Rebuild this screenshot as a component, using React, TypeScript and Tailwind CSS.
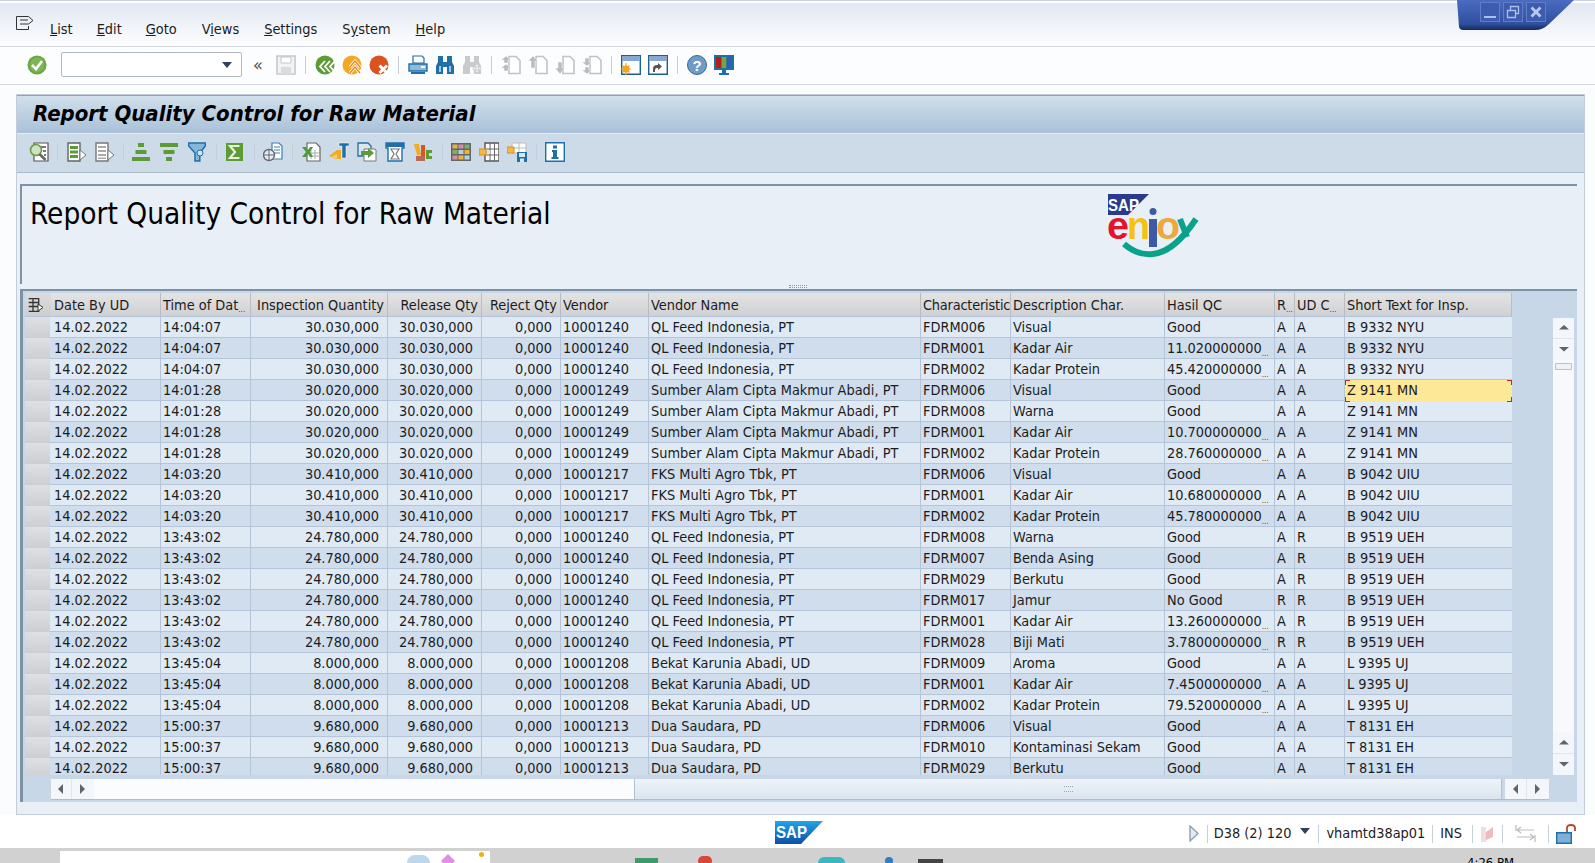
import React from 'react';

type Row = {
  time: string;
  qty: string;
  vendor: string;
  name: string;
  code: string;
  desc: string;
  hasil: string;
  cut?: boolean;
  r: string;
  ud: string;
  text: string;
};

const mk = (time: string, qty: string, vendor: string, name: string, text: string, items: [string, string, string, string, string][]): Row[] =>
  items.map(([code, desc, hasil, r, ud]) => ({
    time,
    qty,
    vendor,
    name,
    code,
    desc,
    hasil,
    cut: hasil.length > 8,
    r,
    ud,
    text,
  }));

const rows: Row[] = [
  ...mk('14:04:07', '30.030,000', '10001240', 'QL Feed Indonesia, PT', 'B 9332 NYU', [
    ['FDRM006', 'Visual', 'Good', 'A', 'A'],
    ['FDRM001', 'Kadar Air', '11.020000000', 'A', 'A'],
    ['FDRM002', 'Kadar Protein', '45.420000000', 'A', 'A'],
  ]),
  ...mk('14:01:28', '30.020,000', '10001249', 'Sumber Alam Cipta Makmur Abadi, PT', 'Z 9141 MN', [
    ['FDRM006', 'Visual', 'Good', 'A', 'A'],
    ['FDRM008', 'Warna', 'Good', 'A', 'A'],
    ['FDRM001', 'Kadar Air', '10.700000000', 'A', 'A'],
    ['FDRM002', 'Kadar Protein', '28.760000000', 'A', 'A'],
  ]),
  ...mk('14:03:20', '30.410,000', '10001217', 'FKS Multi Agro Tbk, PT', 'B 9042 UIU', [
    ['FDRM006', 'Visual', 'Good', 'A', 'A'],
    ['FDRM001', 'Kadar Air', '10.680000000', 'A', 'A'],
    ['FDRM002', 'Kadar Protein', '45.780000000', 'A', 'A'],
  ]),
  ...mk('13:43:02', '24.780,000', '10001240', 'QL Feed Indonesia, PT', 'B 9519 UEH', [
    ['FDRM008', 'Warna', 'Good', 'A', 'R'],
    ['FDRM007', 'Benda Asing', 'Good', 'A', 'R'],
    ['FDRM029', 'Berkutu', 'Good', 'A', 'R'],
    ['FDRM017', 'Jamur', 'No Good', 'R', 'R'],
    ['FDRM001', 'Kadar Air', '13.260000000', 'A', 'R'],
    ['FDRM028', 'Biji Mati', '3.7800000000', 'R', 'R'],
  ]),
  ...mk('13:45:04', '8.000,000', '10001208', 'Bekat Karunia Abadi, UD', 'L 9395 UJ', [
    ['FDRM009', 'Aroma', 'Good', 'A', 'A'],
    ['FDRM001', 'Kadar Air', '7.4500000000', 'A', 'A'],
    ['FDRM002', 'Kadar Protein', '79.520000000', 'A', 'A'],
  ]),
  ...mk('15:00:37', '9.680,000', '10001213', 'Dua Saudara, PD', 'T 8131 EH', [
    ['FDRM006', 'Visual', 'Good', 'A', 'A'],
    ['FDRM010', 'Kontaminasi Sekam', 'Good', 'A', 'A'],
    ['FDRM029', 'Berkutu', 'Good', 'A', 'A'],
  ]),
];

const cols = 'grid grid-cols-[26px_110px_90px_137px_94px_79px_88px_272px_90px_154px_110px_20px_50px_167px]';

const Ico: React.FC<{ children: React.ReactNode; w?: number }> = ({ children, w = 20 }) => (
  <svg width={w} height="20" viewBox={`0 0 ${w} 20`} className="shrink-0 block">
    {children}
  </svg>
);

const Sep = ({ className = 'mx-[9px]' }: { className?: string }) => <div className={`w-px h-[18px] bg-[#c3d0dc] shrink-0 ${className}`} />;

const Page = () => <path d="M8 1.500h7l4 4v13H8z" fill="#fff" stroke="#c0c3c5" strokeWidth="1.600" />;
const G = '#b9bcbe';

const Icons = {
  check: (
    <Ico>
      <circle cx="10" cy="10" r="9.500" fill="#6aa743" />
      <circle cx="10" cy="10" r="7.500" fill="#7cb554" />
      <path d="M5 10l4 4 6-8" fill="none" stroke="#fff" strokeWidth="2.600" />
    </Ico>
  ),
  save: (
    <Ico>
      <path d="M1 1h18v18H1z" fill="#f2f3f3" stroke="#c5c8ca" strokeWidth="1.600" />
      <path d="M5 2h10v6H5z" fill="#fff" stroke="#c5c8ca" />
      <path d="M5 12h10v7H5z" fill="#d9dbdc" />
    </Ico>
  ),
  back: (
    <Ico>
      <circle cx="10" cy="10" r="9.500" fill="#5d9b36" />
      <path d="M10 6l-5 5.500 5 5.500M15 6l-5 5.500 5 5.500M20 6l-5 5.500 5 5.500" fill="none" stroke="#fff" strokeWidth="1.800" />
    </Ico>
  ),
  exit: (
    <Ico>
      <circle cx="10" cy="10" r="9.500" fill="#f5a623" />
      <path d="M8 12l5-6 5 6M8 18l5-6 5 6" fill="none" stroke="#fff" strokeWidth="3" />
      <path d="M8 12l5-6 5 6M8 18l5-6 5 6" fill="none" stroke="#e8801c" strokeWidth="1.200" />
    </Ico>
  ),
  cancel: (
    <Ico>
      <circle cx="10" cy="10" r="9.500" fill="#d9541e" />
      <path d="M10.500 10.500l7.500 7.500M18 10.500L10.500 18" stroke="#fff" strokeWidth="3" />
    </Ico>
  ),
  print: (
    <Ico>
      <path d="M5 1h9l2 2v5H5z" fill="#fff" stroke="#1f6fa8" strokeWidth="1.200" />
      <path d="M1 9h18v7H1z" fill="#8fb9d8" stroke="#1f6fa8" strokeWidth="1.400" />
      <path d="M3 17h14v2H3z" fill="#1f6fa8" />
      <path d="M13 11h4v2h-4z" fill="#fff" />
    </Ico>
  ),
  find: (
    <Ico>
      <path d="M3 1h5v6h4V1h5v6l2 4v8h-7v-7H8v7H1v-8l2-4z" fill="#1f6fa8" />
      <path d="M4 11h2v6H4zM14 11h2v6h-2z" fill="#9cc5e1" />
    </Ico>
  ),
  findNext: (
    <Ico>
      <path d="M3 1h5v6h4V1h5v6l2 4v8h-7v-7H8v7H1v-8l2-4z" fill="#c8cbcd" />
      <path d="M11 12h8v3h-8zM13.500 9.500h3v8h-3z" fill="#eceded" stroke="#c8cbcd" strokeWidth="0.600" />
    </Ico>
  ),
  pageFirst: (
    <Ico>
      <Page />
      <path d="M0 5l5-4 5 4H7v3H3V5zM0 13l5-4 5 4H7v3H3v-3z" fill={G} stroke="#fff" strokeWidth="0.500" />
    </Ico>
  ),
  pagePrev: (
    <Ico>
      <Page />
      <path d="M0 6l5-5 5 5H7v7H3V6z" fill={G} stroke="#fff" strokeWidth="0.500" />
    </Ico>
  ),
  pageNext: (
    <Ico>
      <Page />
      <path d="M0 13l5 6 5-6H7V7H3v6z" fill={G} stroke="#fff" strokeWidth="0.500" />
    </Ico>
  ),
  pageLast: (
    <Ico>
      <Page />
      <path d="M0 7l5 4 5-4H7V3H3v4zM0 15l5 4 5-4H7v-3H3v3z" fill={G} stroke="#fff" strokeWidth="0.500" />
    </Ico>
  ),
  newWin: (
    <Ico>
      <path d="M.7.700h18.600v18.600H.7z" fill="#fff" stroke="#1d5f8e" strokeWidth="1.400" />
      <path d="M1 1h18v5H1z" fill="#88a9cf" />
      <circle cx="5" cy="14" r="3.500" fill="#f5a51c" />
      <path d="M5 8v12M0 14h10M1.500 10.500l7 7M8.500 10.500l-7 7" stroke="#f5a51c" strokeWidth="1.200" />
    </Ico>
  ),
  shortcut: (
    <Ico>
      <path d="M.7.700h18.600v18.600H.7z" fill="#fff" stroke="#1d5f8e" strokeWidth="1.400" />
      <path d="M1 1h18v5H1z" fill="#88a9cf" />
      <path d="M5 17v-3q0-4 4-4h1V8l4 3.500-4 3.500v-2H9q-2 0-2 2v2z" fill="#555" />
    </Ico>
  ),
  help: (
    <Ico>
      <circle cx="10" cy="10" r="9.500" fill="#6f9bc5" stroke="#2c6da0" strokeWidth="1" />
      <text x="10" y="15.500" textAnchor="middle" fontSize="15" fontWeight="700" fontFamily="'Liberation Sans', sans-serif" fill="#fff">
        ?
      </text>
    </Ico>
  ),
  monitor: (
    <Ico>
      <path d="M0 0h20v15H0z" fill="#1f6fa8" />
      <path d="M2 2h5.500v11H2z" fill="#b51d1d" />
      <path d="M7.500 2h5v11h-5z" fill="#78a63c" />
      <path d="M12.500 2H18v11h-5.500z" fill="#2f5fb3" />
      <path d="M8 15h4v3H8zM5 18h10v2H5z" fill="#1f6fa8" />
    </Ico>
  ),
  detail: (
    <Ico>
      <path d="M5 1h14v18H5z" fill="#fff" stroke="#555" strokeWidth="1.200" />
      <path d="M8 4h9v2H8zM14 8h3v2h-3zM15 12h2v2h-2z" fill="#777" />
      <circle cx="7" cy="8" r="5.500" fill="#cfe3c0" stroke="#6a9a4a" strokeWidth="1.600" />
      <path d="M10.500 12l6 6" stroke="#666" strokeWidth="2.600" />
    </Ico>
  ),
  docGreen: (
    <Ico>
      <path d="M1 1h12v18H1z" fill="#fff" stroke="#5d6a5d" strokeWidth="1.400" />
      <path d="M3 4h8v3H3zM3 8.500h8v3H3zM3 13h8v3H3z" fill="#5d9b36" />
      <path d="M13 8l6 5-6 5z" fill="#fff" stroke="#777" />
    </Ico>
  ),
  docGray: (
    <Ico>
      <path d="M1 1h12v18H1z" fill="#fff" stroke="#777" strokeWidth="1.400" />
      <path d="M3 4h8v2H3zM3 8h8v2H3zM3 12h8v2H3zM3 15.500h8v1.500H3z" fill="#aaa" />
      <path d="M13 8l6 5-6 5z" fill="#fff" stroke="#777" />
    </Ico>
  ),
  sortAsc: (
    <Ico w={18}>
      <path d="M6 1h6v4H6zM3.500 8h11v4h-11zM0 15h18v4H0z" fill="#5d9b36" />
    </Ico>
  ),
  sortDesc: (
    <Ico w={18}>
      <path d="M0 1h18v4H0zM3.500 8h11v4h-11zM6 15h6v4H6z" fill="#5d9b36" />
    </Ico>
  ),
  filter: (
    <Ico w={18}>
      <path d="M.7 1h16.600v3l-5.500 7v8H7v-8L.7 4z" fill="#86b6d9" stroke="#1f6fa8" strokeWidth="1.500" />
      <circle cx="12" cy="11" r="3" fill="#cfe3f2" stroke="#1f6fa8" />
    </Ico>
  ),
  sigma: (
    <Ico w={17}>
      <path d="M0 1h17v18H0z" fill="#5d9b36" />
      <path d="M13.500 4H4l5 6-5 6h9.500" fill="none" stroke="#e8f2de" strokeWidth="2.200" />
    </Ico>
  ),
  abap: (
    <Ico>
      <path d="M9 1h7l3 3v13H9z" fill="#fff" stroke="#3f7fae" strokeWidth="1.200" />
      <path d="M11 5h6M11 8h6M11 11h6" stroke="#3f7fae" />
      <circle cx="6" cy="13" r="5.500" fill="#e8edf0" stroke="#667" strokeWidth="1.400" />
      <path d="M6 7.500v11M1 13h10" stroke="#667" />
    </Ico>
  ),
  excel: (
    <Ico>
      <path d="M6 1h9l4 4v14H6z" fill="#fff" stroke="#666" strokeWidth="1.200" />
      <path d="M10 8v9M14 8v9M8 11h10M8 14h10" stroke="#aaa" />
      <path d="M1 5h4l2 3 2-3h3L9 10l3 5H9l-2-3-2 3H1l4-5z" fill="#4f9a3b" />
    </Ico>
  ),
  word: (
    <Ico>
      <path d="M0 14l8-6h4v9H7z" fill="#f0ac22" />
      <path d="M10 1h10v3h-3v12h-4V4h-3z" fill="#1f6fa8" stroke="#fff" strokeWidth="0.500" />
      <path d="M2 15l6-3v5z" fill="#f8c964" />
    </Ico>
  ),
  local: (
    <Ico>
      <path d="M1 1h10l3 3v10H1z" fill="#d7e7f3" stroke="#1f6fa8" strokeWidth="1.300" />
      <path d="M7 7h11l1 1v11H7z" fill="#fff" stroke="#777" />
      <path d="M4 9h7V6l6 5-6 5v-3H4z" fill="#5d9b36" />
    </Ico>
  ),
  layoutT: (
    <Ico>
      <path d="M1 1h18v5h-2v13H3V6H1z" fill="#fff" stroke="#1f6fa8" strokeWidth="1.400" />
      <path d="M1 1h18v4H1z" fill="#1f6fa8" />
      <path d="M6 7h8l-3 5 3 5H6l3-5z" fill="none" stroke="#777" strokeWidth="1.200" />
    </Ico>
  ),
  abc: (
    <Ico>
      <path d="M1 2h5l2 11H4z" fill="#f0ac22" />
      <path d="M8 3h4v11H8z" fill="#d8561f" />
      <path d="M13 8h6v3h-3v3h3v3h-6z" fill="#5d9b36" />
      <path d="M3 14h9v5H3z" fill="#b43a1a" opacity="0.700" />
    </Ico>
  ),
  gridColor: (
    <Ico>
      <path d="M0 1h20v18H0z" fill="#666" />
      <path d="M1.500 2.500h5v4h-5z" fill="#e9b33c" />
      <path d="M7.500 2.500h5v4h-5z" fill="#d78fa0" />
      <path d="M13.500 2.500h5v4h-5z" fill="#7fb069" />
      <path d="M1.500 8h5v4h-5z" fill="#7fb069" />
      <path d="M7.500 8h5v4h-5z" fill="#b6cfe2" />
      <path d="M13.500 8h5v4h-5z" fill="#e9b33c" />
      <path d="M1.500 13.500h5v4h-5z" fill="#d78fa0" />
      <path d="M7.500 13.500h5v4h-5z" fill="#e9b33c" />
      <path d="M13.500 13.500h5v4h-5z" fill="#b6cfe2" />
    </Ico>
  ),
  gridPick: (
    <Ico>
      <path d="M6 1h14v18H6z" fill="#fff" stroke="#555" strokeWidth="1.400" />
      <path d="M11 1v18M15.500 1v18M6 7h14M6 13h14" stroke="#666" />
      <path d="M6 8h5v4H6z" fill="#ddd" />
      <path d="M0 7h7v6H0z" fill="#f5b942" stroke="#e08a18" />
    </Ico>
  ),
  gridSave: (
    <Ico>
      <path d="M5 1h14v10H5z" fill="#fff" stroke="#bbb" />
      <path d="M12 1v10M5 6h14" stroke="#bbb" />
      <path d="M0 5h7v6H0z" fill="#f5b942" stroke="#e08a18" />
      <path d="M10 10h10v10H10z" fill="#1f6fa8" />
      <path d="M12 11h6v4h-6zM13 16.500h4V20h-4z" fill="#d7e7f3" />
    </Ico>
  ),
  info: (
    <Ico>
      <path d="M.7.700h18.600v18.600H.7z" fill="#fff" stroke="#1f6fa8" strokeWidth="1.400" />
      <path d="M8 3.500h4v3H8zM7 8h5v7h1.500v2h-7v-2H8V10H7z" fill="#1f6fa8" />
    </Ico>
  ),
};

const Arrow = ({ dir }: { dir: 'u' | 'd' | 'l' | 'r' }) => {
  const p = { u: 'M0 6.500L5 2l5 4.500z', d: 'M0 2h10L5 6.500z', l: 'M7 0v10L2 5z', r: 'M2 0v10l5-5z' }[dir];
  return (
    <svg width="10" height="10" viewBox="0 0 10 10">
      <path d={p} fill="#5f656b" />
    </svg>
  );
};

const ScrollBtn = ({ dir, className = '' }: { dir: 'u' | 'd' | 'l' | 'r'; className?: string }) => (
  <div className={`flex items-center justify-center bg-[#f3f6fa] ${className}`}>
    <Arrow dir={dir} />
  </div>
);

const Dots = () => <span className="self-end pb-[2px] text-[8px] leading-none text-[#444]">...</span>;

const SapLogo = () => (
  <svg width="48" height="23" viewBox="0 0 48 23" className="block">
    <defs>
      <linearGradient id="sapg" x1="0" y1="0" x2="0" y2="1">
        <stop offset="0" stopColor="#20a5e6" />
        <stop offset="1" stopColor="#0b4fa8" />
      </linearGradient>
    </defs>
    <path d="M0 0h48L26 23H0z" fill="url(#sapg)" />
    <text x="1" y="17" fontSize="17" fontWeight="700" fontFamily="'Liberation Sans', sans-serif" fill="#fff" textLength="31" lengthAdjust="spacingAndGlyphs">
      SAP
    </text>
  </svg>
);

const EnjoyLogo = () => (
  <svg width="92" height="65" viewBox="0 0 92 65" className="block">
    <path d="M0 0h41L20 21H0z" fill="#2a3a8c" />
    <text x="0" y="17" fontSize="17" fontWeight="700" fontFamily="'Liberation Sans', sans-serif" fill="#fff" textLength="31" lengthAdjust="spacingAndGlyphs">
      SAP
    </text>
    <g fontFamily="'Liberation Sans', sans-serif" fontWeight="700" fontSize="38">
      <text x="-1" y="45" fill="#e2142d" textLength="22" lengthAdjust="spacingAndGlyphs">e</text>
      <text x="19" y="45" fill="#f6c211" textLength="23" lengthAdjust="spacingAndGlyphs">n</text>
      <text x="48" y="45" fill="#eea83c" textLength="24" lengthAdjust="spacingAndGlyphs">o</text>
    </g>
    <circle cx="45" cy="17.500" r="3.500" fill="#3c5aa6" />
    <path d="M41 25h8v28h-8z" fill="#3c5aa6" />
    <path d="M16 50Q30 62 45 60Q66 58 88 25" fill="none" stroke="#0ba28c" strokeWidth="6" />
    <path d="M72 25l7 18" fill="none" stroke="#0ba28c" strokeWidth="6" />
  </svg>
);

const Cell = ({ children, right, first }: { children?: React.ReactNode; right?: boolean; first?: boolean }) => (
  <div className={`flex h-full min-w-0 items-center overflow-hidden whitespace-nowrap border-r border-[#b4c5d9] ${right ? 'justify-end pr-[8px]' : first ? 'pl-[3px]' : 'pl-[2px]'}`}>
    {children}
  </div>
);

const Head = ({ label, right, cut, tight, first }: { label: string; right?: boolean; cut?: boolean; tight?: boolean; first?: boolean }) => (
  <div className={`flex h-full min-w-0 items-center overflow-hidden whitespace-nowrap border-r border-[#b9bcc0] bg-gradient-to-b from-[#e4e4e4] to-[#cfd0d2] pt-[2px] ${right ? 'justify-end pr-[3px]' : first ? 'pl-[3px]' : 'pl-[2px]'} ${tight ? 'tracking-[-0.2px]' : ''}`}>
    {label}
    {cut && <Dots />}
  </div>
);

export default function App() {
  return (
    <div className="relative flex h-[863px] w-[1595px] flex-col overflow-hidden bg-[#fbfcfe] font-['DejaVu_Sans',sans-serif] text-[14.4px] text-[#1c1c1c] [font-stretch:condensed]">
      {/* window buttons */}
      <div className="absolute right-[20px] top-0 z-10 h-[31px] w-[118px]">
        <svg width="118" height="31" viewBox="0 0 118 31" className="absolute inset-0">
          <defs>
            <linearGradient id="wing" x1="0" y1="0" x2="0" y2="1">
              <stop offset="0" stopColor="#4a6bc0" />
              <stop offset="0.8" stopColor="#2f4f9f" />
              <stop offset="1" stopColor="#14285c" />
            </linearGradient>
          </defs>
          <path d="M0 0h117L92 24q-6 6-14 6H6q-3 0-4-3z" fill="url(#wing)" />
        </svg>
        <div className="absolute left-[23px] top-[2px] flex gap-[3px]">
          <div className="flex h-[20px] w-[20px] items-end justify-center border border-[#5f7dc8] bg-[#3d5cb0] pb-[3px]">
            <div className="h-[2px] w-[12px] bg-[#a9c0e8]" />
          </div>
          <div className="flex h-[20px] w-[20px] items-center justify-center border border-[#5f7dc8] bg-[#3d5cb0]">
            <svg width="14" height="14" viewBox="0 0 14 14">
              <path d="M1.500 5.500h8v7h-8zM4.500 5V1.500h8v7H10" fill="none" stroke="#a9c0e8" strokeWidth="1.300" />
            </svg>
          </div>
          <div className="flex h-[20px] w-[20px] items-center justify-center border border-[#5f7dc8] bg-[#3d5cb0]">
            <svg width="12" height="12" viewBox="0 0 12 12">
              <path d="M1.500 1.500l9 9M10.500 1.500l-9 9" stroke="#b8cbee" strokeWidth="2.800" />
            </svg>
          </div>
        </div>
      </div>

      {/* menu bar */}
      <div className="flex h-[47px] shrink-0 items-start border-b border-[#d3d6dc] bg-gradient-to-b from-[#dfe6f2] to-[#fdfdfe] pt-[19px] shadow-[inset_0_1px_0_#c5d2e8,inset_0_3px_0_#fff]">
        <svg width="18" height="14" viewBox="0 0 18 14" className="-mt-[3px] ml-[16px] block">
          <path d="M.5.500h12L17 4.500 12.500 8H4M.5.500v13h12V10M4 4h8" fill="none" stroke="#333" />
        </svg>
        <div className="ml-[16px] flex gap-[25px] leading-[20px]">
          <span><u>L</u>ist</span>
          <span className="-ml-[1px]"><u>E</u>dit</span>
          <span className="-ml-[1px]"><u>G</u>oto</span>
          <span>V<u>i</u>ews</span>
          <span><u>S</u>ettings</span>
          <span>S<u>y</u>stem</span>
          <span><u>H</u>elp</span>
        </div>
      </div>

      {/* system toolbar */}
      <div className="flex h-[38px] shrink-0 items-center border-b border-[#d3d6dc] bg-[#fcfdfe] pb-[2px] pl-[27px]">
        {Icons.check}
        <div className="ml-[14px] flex h-[25px] w-[181px] items-center justify-end rounded-[2px] border border-[#b4b8bf] bg-white pr-[9px]">
          <svg width="10" height="6" viewBox="0 0 10 6">
            <path d="M0 0h10L5 6z" fill="#333f60" />
          </svg>
        </div>
        <span className="ml-[8px] mr-[10px] w-[16px] text-center text-[18px] leading-[18px] text-[#555]">«</span>
        {Icons.save}
        <Sep />
        <div className="flex gap-[7px]">{Icons.back}{Icons.exit}{Icons.cancel}</div>
        <Sep />
        <div className="flex gap-[7px]">{Icons.print}{Icons.find}{Icons.findNext}</div>
        <Sep />
        <div className="flex gap-[7px]">{Icons.pageFirst}{Icons.pagePrev}{Icons.pageNext}{Icons.pageLast}</div>
        <Sep />
        <div className="flex gap-[7px]">{Icons.newWin}{Icons.shortcut}</div>
        <Sep />
        <div className="flex gap-[7px]">{Icons.help}{Icons.monitor}</div>
      </div>

      {/* main window */}
      <div className="mx-[16px] mt-[9px] flex h-[721px] w-[1569px] shrink-0 flex-col border border-[#c3ccd8] bg-[#e8eff6]">
        <div className="flex h-[38px] shrink-0 items-center border-t border-[#8ea3b6] bg-gradient-to-b from-[#d0dfeb] to-[#a9c1d8] pb-[2px] pl-[16px] text-[22px] font-bold italic leading-none text-black">
          Report Quality Control for Raw Material
        </div>
        <div className="flex h-[40px] shrink-0 items-center border-y border-[#aab9c8] border-t-[#e4edf4] bg-[#cddbe8] pb-[2px] pl-[12px]">
          {Icons.detail}
          <Sep className="ml-[8px] mr-[9px]" />
          <div className="flex gap-[8px]">{Icons.docGreen}{Icons.docGray}</div>
          <Sep className="mx-[8px]" />
          <div className="flex gap-[10px]">{Icons.sortAsc}{Icons.sortDesc}{Icons.filter}</div>
          <Sep className="ml-[10px] mr-[9px]" />
          {Icons.sigma}
          <Sep className="ml-[11px] mr-[8px]" />
          {Icons.abap}
          <Sep className="ml-[9px] mr-[8px]" />
          <div className="flex gap-[8px]">{Icons.excel}{Icons.word}{Icons.local}{Icons.layoutT}{Icons.abc}</div>
          <Sep className="ml-[9px] mr-[8px]" />
          <div className="flex gap-[8px]">{Icons.gridColor}{Icons.gridPick}{Icons.gridSave}</div>
          <Sep className="ml-[9px] mr-[8px]" />
          {Icons.info}
        </div>

        <div className="ml-[3px] mr-[7px] mt-[11px] flex h-[100px] shrink-0 border-l-2 border-t-2 border-[#7d92a5]">
          <div className="w-[1086px] pl-[8px] pt-[8px] text-[29.500px] leading-[40px] text-black">Report Quality Control for Raw Material</div>
          <div className="pt-[8px]">
            <EnjoyLogo />
          </div>
        </div>

        <div className="flex h-[5px] shrink-0 justify-center">
          <span className="mr-[6px] mt-[1px] h-[3px] w-[18px] border-y border-dotted border-[#889aa9]" />
        </div>

        {/* grid */}
        <div className="ml-[3px] mr-[7px] flex h-[513px] shrink-0 flex-col border-l-[3px] border-t-2 border-[#7d92a5] bg-[#c7d7e7] pt-[2px]">
          <div className="flex h-[482px] shrink-0">
            <div className="w-[1489px] shrink-0 overflow-hidden pl-[2px]">
              <div className={`${cols} h-[24px] border-b border-[#b4c5d9]`}>
                <div className="flex items-center bg-gradient-to-b from-[#dcdcdc] to-[#cdcecf] pl-[3px]">
                  <svg width="16" height="14" viewBox="0 0 16 14">
                    <path d="M.7.700h10v12.600H.7M.7 4.500h10M.7 8.500h10M5 .7v12.600" fill="none" stroke="#333" strokeWidth="1.300" />
                    <path d="M10 6l5 3.500-5 3.500z" fill="#fff" stroke="#333" />
                  </svg>
                </div>
                <Head label="Date By UD" first />
                <Head label="Time of Dat" cut />
                <Head label="Inspection Quantity" right />
                <Head label="Release Qty" right />
                <Head label="Reject Qty" right />
                <Head label="Vendor" />
                <Head label="Vendor Name" />
                <Head label="Characteristic" tight />
                <Head label="Description Char." />
                <Head label="Hasil QC" />
                <Head label="R" cut />
                <Head label="UD C" cut />
                <Head label="Short Text for Insp." />
              </div>
              <div className="h-[458px] overflow-hidden">
                {rows.map((r, i) => (
                  <div key={i} className={`${cols} h-[21px] border-b border-[#b4c5d9] ${i % 2 === 0 ? 'bg-[#dfeaf5]' : 'bg-[#cfdded]'}`}>
                    <div className="pr-[1px]">
                      <div className="h-full border-b border-[#eef0f2] bg-gradient-to-b from-[#dfe0e2] to-[#cdced2]" />
                    </div>
                    <Cell first>14.02.2022</Cell>
                    <Cell>{r.time}</Cell>
                    <Cell right>{r.qty}</Cell>
                    <Cell right>{r.qty}</Cell>
                    <Cell right>0,000</Cell>
                    <Cell>{r.vendor}</Cell>
                    <Cell>{r.name}</Cell>
                    <Cell>{r.code}</Cell>
                    <Cell>{r.desc}</Cell>
                    <Cell>
                      {r.hasil}
                      {r.cut && <Dots />}
                    </Cell>
                    <Cell>{r.r}</Cell>
                    <Cell>{r.ud}</Cell>
                    {i === 3 ? (
                      <div className="relative flex h-full items-center bg-[#fde898] pl-[2px]">
                        {r.text}
                        <span className="absolute left-0 top-0 h-[5px] w-[5px] border-l border-t border-[#d0202a]" />
                        <span className="absolute right-0 top-0 h-[5px] w-[5px] border-r border-t border-[#d0202a]" />
                        <span className="absolute bottom-0 left-0 h-[5px] w-[5px] border-b border-l border-[#d0202a]" />
                        <span className="absolute bottom-0 right-0 h-[5px] w-[5px] border-b border-r border-[#d0202a]" />
                      </div>
                    ) : (
                      <div className="flex h-full items-center pl-[2px]">{r.text}</div>
                    )}
                  </div>
                ))}
              </div>
            </div>

            {/* vertical scrollbar */}
            <div className="ml-[41px] mt-[25px] flex h-[457px] w-[21px] shrink-0 flex-col bg-[#f7f9fc]">
              <ScrollBtn dir="u" className="h-[21px] border-b border-[#e0e6ee]" />
              <ScrollBtn dir="d" className="h-[21px]" />
              <div className="mx-[2px] mt-[3px] h-[7px] rounded-[1px] border border-[#b9c2cc] bg-[#eef2f6]" />
              <div className="flex-1" />
              <ScrollBtn dir="u" className="h-[22px] border-b border-[#e0e6ee]" />
              <ScrollBtn dir="d" className="h-[21px]" />
            </div>
          </div>

          {/* horizontal scrollbar */}
          <div className="ml-[28px] mt-[4px] flex h-[21px] w-[1498px] shrink-0 border-b border-[#aebccb]">
            <ScrollBtn dir="l" className="w-[21px] border-r border-[#e0e6ee]" />
            <ScrollBtn dir="r" className="w-[22px]" />
            <div className="w-[540px] bg-[#fbfcfd]" />
            <div className="flex w-[868px] items-center justify-center border-x border-[#b2bfcd] bg-gradient-to-b from-[#eef3f8] to-[#dbe5ef]">
              <span className="h-[6px] w-[9px] border-y border-dotted border-[#9aa8b5]" />
            </div>
            <div className="ml-[3px] flex">
              <ScrollBtn dir="l" className="w-[22px] border-r border-[#e0e6ee]" />
              <ScrollBtn dir="r" className="w-[22px]" />
            </div>
          </div>
        </div>
      </div>

      {/* status bar */}
      <div className="flex h-[33px] shrink-0 items-center bg-white pr-[19px] pt-[5px]">
        <div className="-mt-[4px] ml-[775px]">
          <SapLogo />
        </div>
        <div className="ml-auto flex items-center">
          <svg width="10" height="17" viewBox="0 0 10 17">
            <path d="M1 1l8 7.500L1 16z" fill="#e4eaf2" stroke="#8e9fb5" strokeWidth="1.400" />
          </svg>
          <Sep className="ml-[8px] mr-[6px]" />
          <span>D38 (2) 120</span>
          <svg width="10" height="6" viewBox="0 0 10 6" className="-mt-[6px] ml-[9px]">
            <path d="M0 0h10L5 6z" fill="#333f60" />
          </svg>
          <Sep className="ml-[8px] mr-[7px]" />
          <span>vhamtd38ap01</span>
          <Sep className="ml-[7px] mr-[7px]" />
          <span>INS</span>
          <Sep className="ml-[10px] mr-[7px]" />
          <svg width="14" height="16" viewBox="0 0 14 16">
            <path d="M1 1h5v15H1z" fill="#eadfe2" />
            <path d="M6 14V6l7-5v10z" fill="#f2b8c0" />
          </svg>
          <Sep className="ml-[8px] mr-[12px]" />
          <svg width="21" height="18" viewBox="0 0 21 18">
            <path d="M1 5h18M6 2L2 5l4 3M20 12H2M15 9l4 3-4 3M1 0v6M20 10v7" fill="none" stroke="#b9bdc2" strokeWidth="1.200" />
          </svg>
          <Sep className="ml-[12px] mr-[7px]" />
          <svg width="20" height="20" viewBox="0 0 20 20">
            <path d="M11 8V4q0-3 4-3t4 3v3" fill="none" stroke="#b5482a" strokeWidth="1.800" />
            <path d="M.7 8.700h14.600v10.600H.7z" fill="#7fb0d8" stroke="#1f6fa8" strokeWidth="1.400" />
          </svg>
        </div>
      </div>

      {/* taskbar, cropped by the screen edge */}
      <div className="relative flex h-[15px] shrink-0 overflow-hidden bg-[#d1d1d1]">
        <div className="ml-[60px] mt-[3px] flex h-[20px] w-[430px] items-start bg-white">
          <div className="ml-[347px] mt-[4px] h-[16px] w-[23px] rounded-full bg-[#bcd8ea]" />
          <div className="ml-[13px] mt-[5px] h-[10px] w-[10px] rotate-45 bg-[#e58be8]" />
          <div className="ml-[26px] mt-[1px] h-[5px] w-[5px] rounded-full bg-[#e9b31c]" />
        </div>
        <div className="ml-[145px] mt-[10px] h-[8px] w-[23px] bg-[#3f9a6a]" />
        <div className="ml-[40px] mt-[8px] h-[10px] w-[14px] rounded-full bg-[#d8483a]" />
        <div className="ml-[106px] mt-[9px] h-[12px] w-[27px] rounded-full bg-[#3cb6c4]" />
        <div className="ml-[40px] mt-[9px] h-[8px] w-[8px] rounded-full bg-[#2a7fc8]" />
        <div className="ml-[25px] mt-[11px] h-[6px] w-[25px] bg-[#444]" />
        <span className="ml-[524px] mt-[7px] text-[13px] leading-[16px] text-black">4:26 PM</span>
      </div>
    </div>
  );
}
